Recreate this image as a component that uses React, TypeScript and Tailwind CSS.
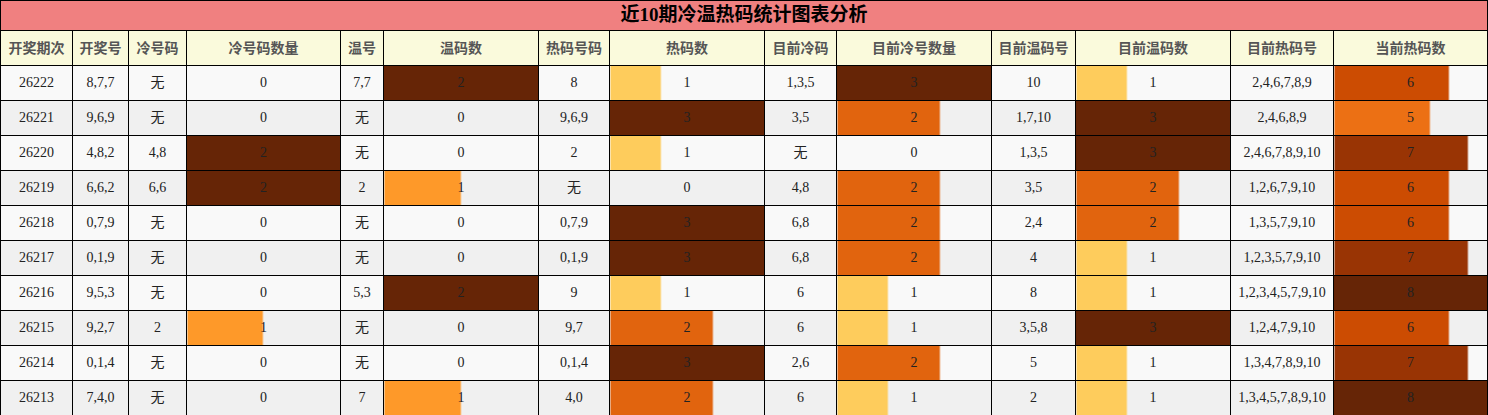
type Row = (string | number)[]

const headers = ['开奖期次', '开奖号', '冷号码', '冷号码数量', '温号', '温码数', '热码号码', '热码数', '目前冷码', '目前冷号数量', '目前温码号', '目前温码数', '目前热码号', '当前热码数']

const widths = [72, 56, 58, 154, 43, 155, 71, 155, 72, 155, 84, 155, 103, 154]

// columns that show a bar, with their max value
const barMax: Record<number, number> = { 3: 2, 5: 2, 7: 3, 9: 3, 11: 3, 13: 8 }

const rows: Row[] = [
	['26222', '8,7,7', '无', 0, '7,7', 2, '8', 1, '1,3,5', 3, '10', 1, '2,4,6,7,8,9', 6],
	['26221', '9,6,9', '无', 0, '无', 0, '9,6,9', 3, '3,5', 2, '1,7,10', 3, '2,4,6,8,9', 5],
	['26220', '4,8,2', '4,8', 2, '无', 0, '2', 1, '无', 0, '1,3,5', 3, '2,4,6,7,8,9,10', 7],
	['26219', '6,6,2', '6,6', 2, '2', 1, '无', 0, '4,8', 2, '3,5', 2, '1,2,6,7,9,10', 6],
	['26218', '0,7,9', '无', 0, '无', 0, '0,7,9', 3, '6,8', 2, '2,4', 2, '1,3,5,7,9,10', 6],
	['26217', '0,1,9', '无', 0, '无', 0, '0,1,9', 3, '6,8', 2, '4', 1, '1,2,3,5,7,9,10', 7],
	['26216', '9,5,3', '无', 0, '5,3', 2, '9', 1, '6', 1, '8', 1, '1,2,3,4,5,7,9,10', 8],
	['26215', '9,2,7', '2', 1, '无', 0, '9,7', 2, '6', 1, '3,5,8', 3, '1,2,4,7,9,10', 6],
	['26214', '0,1,4', '无', 0, '无', 0, '0,1,4', 3, '2,6', 2, '5', 1, '1,3,4,7,8,9,10', 7],
	['26213', '7,4,0', '无', 0, '7', 1, '4,0', 2, '6', 1, '2', 1, '1,3,4,5,7,8,9,10', 8],
]

function barColor(r: number) {
	if (r >= 1) return '#662506'
	if (r >= 0.85) return '#993404'
	if (r >= 0.74) return '#cc4c02'
	if (r >= 0.66) return '#e1640e'
	if (r >= 0.6) return '#ec7014'
	if (r >= 0.45) return '#fe9929'
	return '#fecc5c'
}

function barStyle(value: number, max: number) {
	if (!value) return undefined
	const pct = (value / max) * 100
	const c = barColor(value / max)
	if (pct >= 100) return { background: c }
	const end = `calc(${pct}% - 1px)`
	const edge = `calc(${pct}%)`
	return {
		background: `linear-gradient(to right, ${c} 0, ${c} ${end}, ${c}66 ${end}, ${c}66 ${edge}, transparent ${edge})`,
	}
}

export default function App() {
	return (
		<div className="w-[1488px] bg-white">
			<table className="w-[1488px] table-fixed border-collapse border border-black">
				<colgroup>
					{widths.map((w, i) => (
						<col key={i} style={{ width: w }} />
					))}
				</colgroup>
				<thead>
					<tr>
						<th
							colSpan={14}
							className="h-[29px] border border-black bg-[#f08080] p-0 text-center text-[19px] font-bold text-black font-['Liberation_Serif','Noto_Sans_CJK_SC',serif]"
						>
							近10期冷温热码统计图表分析
						</th>
					</tr>
					<tr>
						{headers.map((h) => (
							<th
								key={h}
								className="h-[35px] border border-black bg-[#fafadc] p-0 text-center text-[14px] font-bold text-[#555] font-['Noto_Sans_CJK_SC','Noto_Sans',sans-serif]"
							>
								{h}
							</th>
						))}
					</tr>
				</thead>
				<tbody>
					{rows.map((row, ri) => (
						<tr key={ri} className={ri % 2 === 0 ? 'bg-[#f9f9f9]' : 'bg-[#f0f0f0]'}>
							{row.map((cell, ci) => {
								const max = barMax[ci]
								return (
									<td
										key={ci}
										className="h-[35px] border border-black p-0 text-center text-[14px] text-[#222] whitespace-nowrap font-['Liberation_Serif','Noto_Sans_CJK_SC',serif]"
										style={max ? barStyle(cell as number, max) : undefined}
									>
										{cell}
									</td>
								)
							})}
						</tr>
					))}
				</tbody>
			</table>
		</div>
	)
}
